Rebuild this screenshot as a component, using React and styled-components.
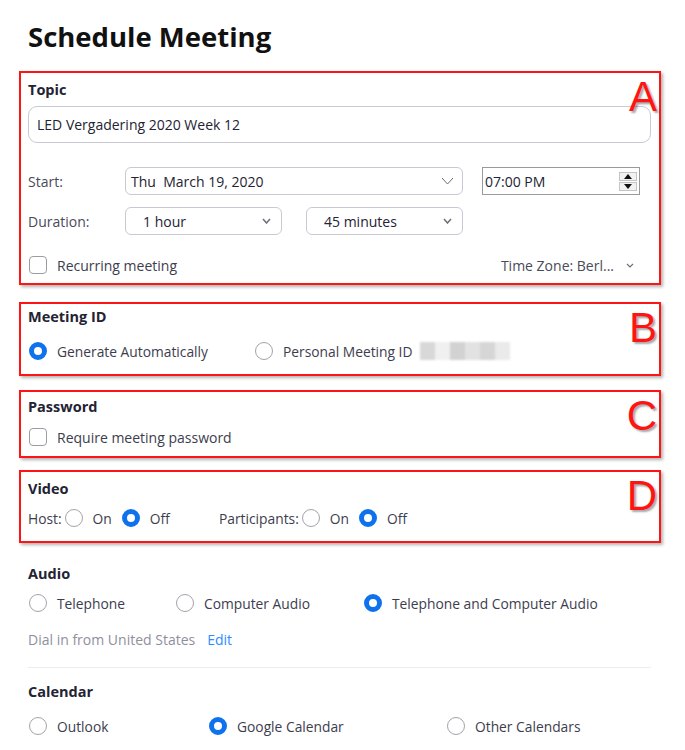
import React from 'react'
import styled, { createGlobalStyle } from 'styled-components'

const GlobalStyle = createGlobalStyle`
    body {
        margin: 0;
        background: #fff;
        font-family: "Open Sans", "Noto Sans", sans-serif;
        color: #3d3d4e;
    }
`

const Page = styled.div`
    width: 685px;
    height: 750px;
    overflow: hidden;
    box-sizing: border-box;
    padding: 0 24px 0 19px;
`

const Title = styled.h1`
    margin: 0 0 15px;
    padding: 18px 0 0 9px;
    font-size: 27.5px;
    font-weight: 700;
    line-height: 38px;
    color: #111;
`

/* red marker boxes drawn over the settings */
const Marked = styled.section`
    position: relative;
    border: 2px solid #ff1414;
    box-shadow: 2px 2px 3px rgba(0, 0, 0, 0.3);
    padding: ${p => p.$pad};
    margin-top: ${p => p.$mt || 0}px;
`

const Letter = styled.span`
    position: absolute;
    top: 3px;
    right: 2px;
    font-family: "Liberation Sans", Arial, sans-serif;
    font-size: 42px;
    line-height: 42px;
    color: #ff1414;
    text-shadow: 2px 2px 2px rgba(0, 0, 0, 0.35);
`

const Plain = styled.section`
    padding-left: 9px;
    margin-top: ${p => p.$mt || 0}px;
`

const Label = styled.div`
    font-size: 14.5px;
    font-weight: 700;
    line-height: 20px;
    color: #232333;
    margin-top: ${p => p.$mt || 0}px;
`

const TextInput = styled.div`
    width: 623px;
    height: 37px;
    box-sizing: border-box;
    margin-top: 6px;
    border: 1px solid #c9c9d4;
    border-radius: 9px;
    display: flex;
    align-items: center;
    padding-left: 8px;
    font-size: 14px;
    color: #232333;
`

const FormRow = styled.div`
    display: grid;
    grid-template-columns: ${p => p.$cols};
    column-gap: ${p => p.$gap}px;
    align-items: center;
    height: 28px;
    margin-top: ${p => p.$mt}px;
`

const RowLabel = styled.span`
    font-size: 14px;
    color: #4a4a5a;
`

const Select = styled.div`
    height: 28px;
    box-sizing: border-box;
    border: 1px solid #c9c9d4;
    border-radius: 6px;
    display: flex;
    align-items: center;
    justify-content: space-between;
    padding: 0 ${p => p.$pr}px 0 ${p => p.$pl}px;
    font-size: 14px;
    color: #232333;
`

const TimeBox = styled.div`
    height: 28px;
    box-sizing: border-box;
    border: 1px solid #9a9a9a;
    display: flex;
    align-items: center;
    justify-content: space-between;
    padding: 0 2px 0 2px;
    font-size: 14px;
    color: #232333;
`

const Spinner = styled.div`
    display: flex;
    flex-direction: column;
    gap: 1px;
`

const SpinButton = styled.div`
    width: 18px;
    height: 9px;
    box-sizing: border-box;
    border: 1px solid #c4c4c4;
    background: #f2f2f2;
    display: flex;
    align-items: center;
    justify-content: center;
`

const CheckRow = styled.div`
    display: flex;
    align-items: center;
    justify-content: space-between;
    height: 22px;
    margin-top: ${p => p.$mt}px;
`

const Check = styled.label`
    display: flex;
    align-items: center;
    gap: 10px;
    padding-left: 1px;
    font-size: 14px;
    color: #3d3d4e;
`

const Box = styled.span`
    width: 18px;
    height: 18px;
    box-sizing: border-box;
    border: 1px solid #9c9ca6;
    border-radius: 4px;
`

const TimeZone = styled.div`
    display: flex;
    align-items: center;
    gap: 12px;
    padding-right: 25px;
    font-size: 14px;
    color: #4a4a5a;
`

const OptionRow = styled.div`
    display: grid;
    grid-template-columns: ${p => p.$cols};
    align-items: center;
    height: 22px;
    margin-top: ${p => p.$mt}px;
`

const Option = styled.label`
    display: flex;
    align-items: center;
    gap: ${p => p.$gap || 10}px;
    padding-left: ${p => p.$pl ?? 1}px;
    font-size: 13.8px;
    color: #3d3d4e;
    white-space: nowrap;
`

const Radio = styled.span`
    flex: none;
    width: 18px;
    height: 18px;
    box-sizing: border-box;
    border-radius: 50%;
    border: ${p => p.$on ? '5px solid #0e72ed' : '1px solid #a3a3ab'};
    background: #fff;
`

const Blurred = styled.span`
    display: flex;
    margin-left: -2px;
    filter: blur(0.8px);
`

const Pixel = styled.span`
    width: 15px;
    height: 18px;
    background: ${p => p.$c};
`

const VideoRow = styled.div`
    display: flex;
    align-items: center;
    height: 22px;
    margin-top: 8px;
    font-size: 13.8px;
    color: #3d3d4e;
`

const VideoGroup = styled.div`
    display: flex;
    align-items: center;
    width: ${p => p.$w}px;
`

const VideoLabel = styled.span`
    margin-right: 3px;
`

const DialIn = styled.div`
    margin-top: 16px;
    line-height: 20px;
    font-size: 14px;
    color: #8f8f9c;

    a {
        color: #2d8cff;
        text-decoration: none;
        margin-left: 12px;
    }
`

const Divider = styled.hr`
    width: 623px;
    margin: 17px 0 0;
    border: none;
    border-top: 1px solid #ededf0;
`

function Chevron({ w = 12, h = 7, stroke = 1.2 })
{
    return (
        <svg width={w} height={h} viewBox={`0 0 ${w} ${h}`}>
            <polyline points={`1,1 ${w / 2},${h - 1} ${w - 1},1`} fill='none'
                stroke='#6e6e7a' strokeWidth={stroke} />
        </svg>
    )
}

function Tri({ up })
{
    return (
        <svg width='8' height='5' viewBox='0 0 8 5'>
            <polygon points={up ? '0,5 4,0 8,5' : '0,0 8,0 4,5'} fill='#111' />
        </svg>
    )
}

export default function App()
{
    return (
        <Page>
            <GlobalStyle />
            <Title>Schedule Meeting</Title>

            <Marked $pad='7px 0 7px 7px'>
                <Letter>A</Letter>
                <Label>Topic</Label>
                <TextInput>LED Vergadering 2020 Week 12</TextInput>

                <FormRow $cols='78px 338px 158px' $gap={19} $mt={24}>
                    <RowLabel>Start:</RowLabel>
                    <Select $pl={5} $pr={8}>
                        <span>Thu&nbsp; March 19, 2020</span>
                        <Chevron w={13} h={8} stroke={1} />
                    </Select>
                    <TimeBox>
                        <span>07:00 PM</span>
                        <Spinner>
                            <SpinButton><Tri up /></SpinButton>
                            <SpinButton><Tri /></SpinButton>
                        </Spinner>
                    </TimeBox>
                </FormRow>

                <FormRow $cols='73px 157px 157px' $gap={24} $mt={12}>
                    <RowLabel>Duration:</RowLabel>
                    <Select $pl={17} $pr={10}>
                        <span>1 hour</span>
                        <Chevron w={9} h={6} stroke={1.5} />
                    </Select>
                    <Select $pl={17} $pr={10}>
                        <span>45 minutes</span>
                        <Chevron w={9} h={6} stroke={1.5} />
                    </Select>
                </FormRow>

                <CheckRow $mt={19}>
                    <Check><Box />Recurring meeting</Check>
                    <TimeZone>
                        <span>Time Zone: Berl...</span>
                        <Chevron w={8} h={5} stroke={1.2} />
                    </TimeZone>
                </CheckRow>
            </Marked>

            <Marked $pad='3px 0 12px 7px' $mt={17}>
                <Letter>B</Letter>
                <Label>Meeting ID</Label>
                <OptionRow $cols='226px 1fr' $mt={13}>
                    <Option><Radio $on />Generate Automatically</Option>
                    <Option>
                        <Radio />Personal Meeting ID
                        <Blurred>
                            <Pixel $c='#d8d8d8' />
                            <Pixel $c='#f0f0f0' />
                            <Pixel $c='#d2d2d2' />
                            <Pixel $c='#e2e2e2' />
                            <Pixel $c='#d6d6d6' />
                            <Pixel $c='#eaeaea' />
                        </Blurred>
                    </Option>
                </OptionRow>
            </Marked>

            <Marked $pad='5px 0 8px 7px' $mt={14}>
                <Letter>C</Letter>
                <Label>Password</Label>
                <CheckRow $mt={9}>
                    <Check><Box />Require meeting password</Check>
                </CheckRow>
            </Marked>

            <Marked $pad='7px 0 12px 7px' $mt={12}>
                <Letter>D</Letter>
                <Label>Video</Label>
                <VideoRow>
                    <VideoGroup $w={191}>
                        <VideoLabel>Host:</VideoLabel>
                        <Option $pl={0} $gap={10}><Radio />On</Option>
                        <Option $pl={10} $gap={10}><Radio $on />Off</Option>
                    </VideoGroup>
                    <VideoGroup $w={200}>
                        <VideoLabel>Participants:</VideoLabel>
                        <Option $pl={0} $gap={10}><Radio />On</Option>
                        <Option $pl={10} $gap={10}><Radio $on />Off</Option>
                    </VideoGroup>
                </VideoRow>
            </Marked>

            <Plain $mt={21}>
                <Label>Audio</Label>
                <OptionRow $cols='147px 188px 1fr' $mt={8}>
                    <Option><Radio />Telephone</Option>
                    <Option><Radio />Computer Audio</Option>
                    <Option><Radio $on />Telephone and Computer Audio</Option>
                </OptionRow>
                <DialIn>
                    Dial in from United States<a href='#'>Edit</a>
                </DialIn>
                <Divider />
                <Label $mt={14}>Calendar</Label>
                <OptionRow $cols='180px 238px 1fr' $mt={13}>
                    <Option><Radio />Outlook</Option>
                    <Option><Radio $on />Google Calendar</Option>
                    <Option><Radio />Other Calendars</Option>
                </OptionRow>
            </Plain>
        </Page>
    )
}
